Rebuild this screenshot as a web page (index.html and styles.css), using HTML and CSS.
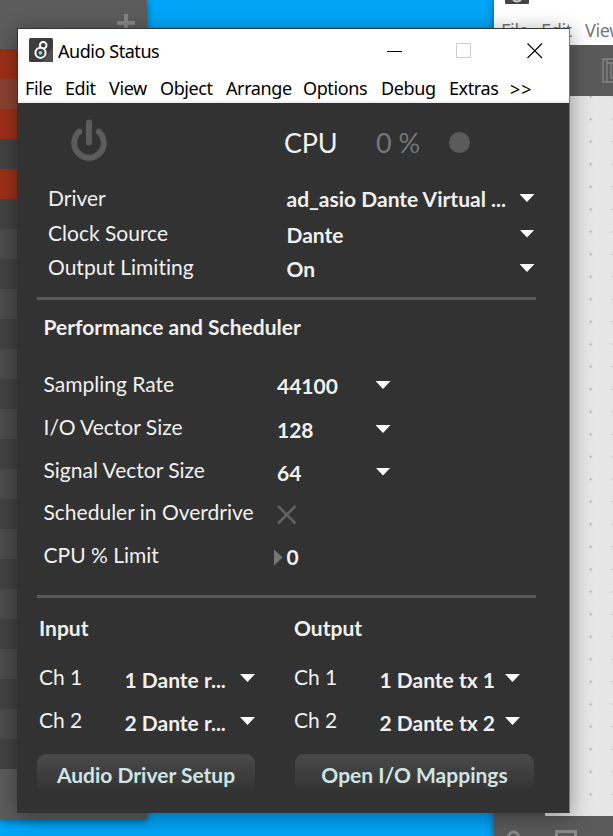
FILE: index.html
```
<!DOCTYPE html>
<html lang="en">
<head>
<meta charset="utf-8">
<title>Audio Status</title>
<link rel="stylesheet" href="styles.css">
</head>
<body>
<div class="desktop">
  <div class="tracks">
    <div class="tracks-head"><svg width="18" height="18" viewBox="0 0 18 18"><path d="M9 0v18M0 9h18" stroke="#858585" stroke-width="4"/></svg></div>
    <div class="track red"></div><div class="track rust"></div><div class="track red"></div><div class="track"></div><div class="track red"></div>
    <div class="stripes"></div>
  </div>

  <div class="patcher">
    <div class="patcher-top">
      <div class="patcher-logo"><svg width="24" height="5" viewBox="0 0 24 5"><rect width="24" height="5" y="-1" rx="1" fill="#444"/><path d="M8 0q4 3 8 0" fill="none" stroke="#ccc" stroke-width="2"/></svg></div>
      <div class="patcher-menu"><span>File</span><span>Edit</span><span>View</span></div>
    </div>
    <div class="patcher-tools"><svg width="20" height="26" viewBox="0 0 20 26" fill="none" stroke="#858585" stroke-width="1.3"><path d="M1 1v23h4M5 1v23M1 1h19M5 5h15M9 5v15h11M5 24h15"/></svg></div>
    <div class="patcher-canvas"></div>
    <div class="patcher-foot">
      <svg width="100" height="20" viewBox="0 0 100 20" fill="none" stroke="#8a8a8a" stroke-width="3"><circle cx="19.500" cy="21" r="5"/><path d="M62.500 20V15.500H81.500V20"/></svg>
    </div>
  </div>

  <div class="window">
    <div class="titlebar">
      <svg class="logo" width="24" height="24" viewBox="0 0 24 24"><rect width="24" height="24" rx="1.500" fill="#3d3d3d"/><path d="M24 9v15H13z" fill="#505050"/><circle cx="14.200" cy="7.300" r="3.300" fill="none" stroke="#fff" stroke-width="1.900"/><circle cx="11.500" cy="14.800" r="5.100" fill="#3d3d3d" stroke="#fff" stroke-width="2"/><circle cx="11.500" cy="14.800" r="1.900" fill="#72e0dc"/></svg>
      <span class="title">Audio Status</span>
      <svg class="controls" width="156" height="16" viewBox="0 0 156 16" fill="none"><path d="M0 8.500h15" stroke="#000"/><path d="M69.500.500h14v14h-14z" stroke="#ccc"/><path d="M140.500.500l14.500 14.500M155 .500l-14.500 14.500" stroke="#000" stroke-width="1.100"/></svg>
    </div>
    <div class="menubar"><span>File</span><span>Edit</span><span>View</span><span>Object</span><span>Arrange</span><span>Options</span><span>Debug</span><span>Extras</span><span class="more">&gt;&gt;</span></div>
    <div class="panel">
      <div class="summary">
        <svg width="38" height="44" viewBox="0 0 38 44" fill="none" stroke="#5c5c5c" stroke-width="6" stroke-linecap="round"><path d="M19 5.500v20M9.200 14.800a14.800 14.800 0 1 0 19.600 0"/></svg>
        <span class="cpu">CPU</span><span class="load">0 %</span><span class="led"></span>
      </div>
      <div class="driver">
        <div class="row first"><span>Driver</span><b>ad_asio Dante Virtual ...</b><i class="arrow"></i></div>
        <div class="row"><span>Clock Source</span><b>Dante</b><i class="arrow"></i></div>
        <div class="row"><span>Output Limiting</span><b>On</b><i class="arrow"></i></div>
      </div>
      <div class="rule"></div>
      <h2>Performance and Scheduler</h2>
      <div class="perf">
        <div class="row"><span>Sampling Rate</span><b>44100</b><i class="arrow"></i></div>
        <div class="row vector"><span>I/O Vector Size</span><b>128</b><i class="arrow"></i></div>
        <div class="row signal"><span>Signal Vector Size</span><b>64</b><i class="arrow"></i></div>
        <div class="row"><span>Scheduler in Overdrive</span><svg class="cross" width="20" height="20" viewBox="0 0 20 20"><path d="M1 1l17.500 17.500M18.500 1L1 18.500" stroke="#626262" stroke-width="2.500"/></svg></div>
        <div class="row limit"><span>CPU % Limit</span><b><i class="marker"></i>0</b></div>
      </div>
      <div class="rule"></div>
      <div class="channels">
        <div class="io input">
          <h3>Input</h3>
          <div class="row"><span>Ch 1</span><b>1 Dante r...</b><i class="arrow"></i></div>
          <div class="row"><span>Ch 2</span><b>2 Dante r...</b><i class="arrow"></i></div>
        </div>
        <div class="io output">
          <h3>Output</h3>
          <div class="row"><span>Ch 1</span><b>1 Dante tx 1</b><i class="arrow"></i></div>
          <div class="row"><span>Ch 2</span><b>2 Dante tx 2</b><i class="arrow"></i></div>
        </div>
      </div>
      <div class="buttons"><button class="setup">Audio Driver Setup</button><button class="mappings">Open I/O Mappings</button></div>
    </div>
  </div>
</div>
</body>
</html>
```
FILE: styles.css
```
* { box-sizing: border-box; }
body { margin: 0; }
.desktop { position: relative; width: 613px; height: 836px; overflow: hidden; background: #00a5f8; font-family: Lato, sans-serif; }
.desktop svg { display: block; flex: none; }

.tracks { position: absolute; left: 0; top: 0; width: 147px; height: 820px; background: #5c5c5c; box-shadow: 0 1px 7px rgba(0,0,0,.45); }
.tracks-head { height: 48.500px; padding: 14px 0 0 117px; }
.track { height: 30px; background: #424242; }
.red { background: #9c2f18; }
.rust { background: #8a4131; }
.stripes { height: 570px; background: repeating-linear-gradient(#424242 0 30px, #4c4c4c 30px 60px); }

.patcher { position: absolute; left: 494px; top: 0; width: 140px; height: 840px; background: #5a5a5a; box-shadow: 0 0 8px rgba(0,0,0,.45); }
.patcher-top { height: 45px; background: #fff; }
.patcher-logo { padding-left: 11px; height: 18px; }
.patcher-menu { display: flex; font: 18px/24px "Noto Sans", sans-serif; color: #777; padding-left: 7px; letter-spacing: -.3px; }
.patcher-menu span { width: 40px; }
.patcher-menu span:nth-child(2) { width: 44px; }
.patcher-tools { height: 51px; padding: 13px 0 0 108px; }
.patcher-canvas { height: 720px; margin-left: 51px; background: #e6e6e6 linear-gradient(#b4b4b4, #b4b4b4) 0 0 / 0 0 no-repeat; background: #e6e6e6 radial-gradient(circle, #aaa .8px, transparent 1.300px) 34.500px -10.500px / 22.500px 22.500px; }

.window { position: absolute; left: 17px; top: 28px; width: 553px; height: 785px; border: 1px solid #333; border-right-color: #777; background: #323232; box-shadow: 0 4px 20px rgba(0,0,0,.38); }
.titlebar { display: flex; height: 44px; background: #fff; padding: 9px 0 0 11px; }
.title { font: 18px/26px "Noto Sans", sans-serif; width: 334px; padding-left: 5px; color: #000; white-space: nowrap; letter-spacing: -.45px; }
.controls { margin: 5px 0 0; }
.menubar { display: flex; height: 30px; background: #fff; border-bottom: 2px solid #f0f0f0; padding-left: 7px; font: 18px/31px "Noto Sans", sans-serif; color: #000; letter-spacing: -.4px; }
.menubar span { flex: none; white-space: nowrap; width: 40px; }
.menubar span:nth-child(2) { width: 44px; }
.menubar span:nth-child(3) { width: 51px; }
.menubar span:nth-child(4) { width: 66px; }
.menubar span:nth-child(5) { width: 77px; }
.menubar span:nth-child(6) { width: 78px; }
.menubar span:nth-child(7) { width: 68px; }
.menubar span:nth-child(8) { width: 61px; }
.menubar .more { letter-spacing: 1px; line-height: 32px; }

.panel { color: #f0f0f0; font-size: 21px; line-height: 28px; white-space: nowrap; font-variant-ligatures: none; }
.summary { display: flex; height: 79px; padding: 14px 0 0 52px; }
.cpu { width: 92px; margin-left: 176px; font-size: 27px; line-height: 52px; letter-spacing: -.3px; }
.load { width: 73px; font-size: 27px; line-height: 52px; color: #75777c; }
.led { width: 21px; height: 21px; margin-top: 15px; border-radius: 50%; background: #5a5a5a; }
.row { display: flex; align-items: flex-start; }
.row span { flex: none; }
.row b { flex: none; font-weight: 700; padding-top: 2px; }
.arrow { flex: none; width: 15px; height: 8px; background: #fff; clip-path: polygon(0 0, 100% 0, 50% 100%); margin-top: 11px; }
.driver { height: 115px; padding: 2px 0 0 30px; }
.driver .row { height: 34.500px; }
.driver .first b { padding-top: 1px; }
.driver .first .arrow { margin-top: 10px; }
.driver span { width: 238.500px; }
.driver b { width: 233px; }
.rule { width: 499px; height: 3px; margin-left: 19px; background: #5a5a5a; }
h2, h3 { margin: 0; font-size: 21px; line-height: 28px; font-weight: 700; }
h2 { height: 57px; padding: 13px 0 0 25.500px; }
.perf { height: 238px; padding: 13px 0 0 25.500px; }
.perf .row { height: 43px; }
.perf .vector { height: 42.500px; }
.perf .vector b, .perf .signal b { padding-top: 3px; }
.perf .vector .arrow, .perf .signal .arrow { margin-top: 12px; }
.perf .signal { height: 42.500px; }
.perf span { width: 233.500px; }
.perf b { width: 98.500px; }
.cross { margin: 7px 0 0 -.5px; }
.perf .limit span { width: 230px; }
.marker { display: inline-block; width: 9px; height: 17px; margin-right: 4px; background: #777; clip-path: polygon(0 0, 100% 50%, 0 100%); vertical-align: -1px; }
.channels { display: flex; height: 156px; padding: 16px 0 0 21px; }
.io { width: 255px; }
.io h3 { height: 49px; }
.io .row { height: 43px; }
.io .row b { padding-top: 3px; }
.io span { width: 85.500px; }
.io b { width: 115.500px; }
.output b { width: 125.500px; }
.buttons { display: flex; padding-left: 19px; gap: 40px; }
button { height: 39px; padding: 3px 0 0; border: 0; border-radius: 9px; font: 700 21px/28px Lato, sans-serif; color: #cfe5e5; background: linear-gradient(#4a4a4a, #323232); }
.setup { width: 218px; }
.mappings { width: 239px; }
```
